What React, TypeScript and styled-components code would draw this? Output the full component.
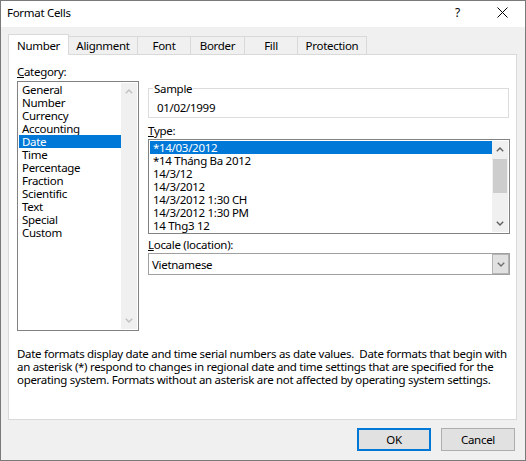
import React from 'react';
import styled, { createGlobalStyle } from 'styled-components';

const GlobalStyle = createGlobalStyle`
  html, body {
    margin: 0;
    padding: 0;
    background: #ffffff;
  }
  body {
    font-family: 'Noto Sans', 'Open Sans', sans-serif;
    font-size: 11.5px;
    letter-spacing: -0.3px;
    color: #000000;
  }
  * {
    box-sizing: border-box;
  }
`;

const Window = styled.div`
  width: 526px;
  height: 461px;
  border: 1px solid #7a7a7a;
  background: #f0f0f0;
  display: flex;
  flex-direction: column;
`;

const TitleBar = styled.div`
  height: 26px;
  background: #ffffff;
  display: flex;
  align-items: center;
  padding: 0 0 3px 6px;
`;

const Title = styled.div`
  flex: 1;
  line-height: 13px;
`;

const CaptionButton = styled.div`
  width: 45px;
  height: 20px;
  display: flex;
  align-items: center;
  justify-content: center;
  font-size: 12px;
  color: #000;
`;

const Body = styled.div`
  flex: 1;
  display: flex;
  flex-direction: column;
  padding: 7px 8px 0 7px;
`;

const TabStrip = styled.div`
  height: 20px;
  display: flex;
  align-items: flex-end;
`;

const Tab = styled.div<{ $width: number; $active?: boolean }>`
  position: relative;
  width: ${(p) => p.$width}px;
  height: ${(p) => (p.$active ? 21 : 18)}px;
  margin-bottom: ${(p) => (p.$active ? -1 : 0)}px;
  margin-left: -1px;
  z-index: ${(p) => (p.$active ? 2 : 1)};
  border: 1px solid #d9d9d9;
  border-bottom: none;
  background: ${(p) => (p.$active ? '#ffffff' : '#f0f0f0')};
  display: flex;
  justify-content: center;
  padding-top: ${(p) => (p.$active ? 4 : 2)}px;
  line-height: 13px;

  &:first-child {
    margin-left: 0;
  }
`;

const Panel = styled.div`
  width: 509px;
  height: 366px;
  background: #ffffff;
  border: 1px solid #d9d9d9;
  padding: 10px 6px 0 8px;
  display: flex;
  flex-direction: column;
`;

const Columns = styled.div`
  display: grid;
  grid-template-columns: 122px 362px;
  column-gap: 9px;
  align-items: start;
`;

const Column = styled.div`
  display: flex;
  flex-direction: column;
`;

const FieldLabel = styled.div<{ $gap: number; $top?: number }>`
  line-height: 13px;
  margin-top: ${(p) => p.$top ?? 0}px;
  margin-bottom: ${(p) => p.$gap}px;
`;

const ListBox = styled.div<{ $height: number }>`
  height: ${(p) => p.$height}px;
  border: 1px solid #828282;
  background: #ffffff;
  padding: 1px;
  display: flex;
`;

const Items = styled.div`
  flex: 1;
  display: flex;
  flex-direction: column;
`;

const Item = styled.div<{ $selected?: boolean }>`
  height: 13px;
  line-height: 13px;
  padding-left: 3px;
  white-space: nowrap;
  background: ${(p) => (p.$selected ? '#0078d7' : 'transparent')};
  color: ${(p) => (p.$selected ? '#ffffff' : '#000000')};
`;

const ScrollBar = styled.div`
  width: 16px;
  background: #f0f0f0;
  display: flex;
  flex-direction: column;
`;

const ScrollArrow = styled.div`
  height: 17px;
  display: flex;
  align-items: center;
  justify-content: center;
`;

const Track = styled.div`
  flex: 1;
  display: flex;
  flex-direction: column;
`;

const Thumb = styled.div`
  margin: 1px 1px 0 1px;
  height: 34px;
  background: #cdcdcd;
`;

const Group = styled.fieldset`
  margin: 17px 1px 0 0;
  padding: 0 8px 3px 8px;
  border: 1px solid #dcdcdc;
  min-width: 0;
`;

const Legend = styled.legend`
  margin-left: -4px;
  padding: 0 1px;
  line-height: 13px;
`;

const SampleValue = styled.div`
  margin-top: 6px;
  line-height: 13px;
`;

const Combo = styled.div`
  height: 22px;
  border: 1px solid #a0a0a0;
  background: #ffffff;
  display: flex;
  align-items: stretch;
`;

const ComboText = styled.div`
  flex: 1;
  padding-left: 3px;
  display: flex;
  align-items: center;
`;

const ComboButton = styled.div`
  width: 17px;
  background: #e1e1e1;
  border: 1px solid #b4b4b4;
  display: flex;
  align-items: center;
  justify-content: center;
`;

const Description = styled.p`
  margin: 16px 0 0 0;
  line-height: 13px;
`;

const ButtonRow = styled.div`
  display: flex;
  justify-content: flex-end;
  gap: 10px;
  margin: 8px 2px 0 0;
`;

const Button = styled.div<{ $default?: boolean }>`
  width: 74px;
  height: 23px;
  background: #e1e1e1;
  border: ${(p) => (p.$default ? '2px solid #0078d7' : '1px solid #adadad')};
  display: flex;
  align-items: center;
  justify-content: center;
`;

const Chevron = ({ up, color }: { up?: boolean; color: string }) => (
  <svg width="8" height="5" viewBox="0 0 8 5">
    <polyline
      points={up ? '0.8,4.2 4,1 7.2,4.2' : '0.8,0.8 4,4 7.2,0.8'}
      fill="none"
      stroke={color}
      strokeWidth="1.4"
    />
  </svg>
);

const tabs = [
  { label: 'Number', width: 61, active: true },
  { label: 'Alignment', width: 70 },
  { label: 'Font', width: 54 },
  { label: 'Border', width: 55 },
  { label: 'Fill', width: 54 },
  { label: 'Protection', width: 70 },
];

const categories = [
  'General',
  'Number',
  'Currency',
  'Accounting',
  'Date',
  'Time',
  'Percentage',
  'Fraction',
  'Scientific',
  'Text',
  'Special',
  'Custom',
];

const types = [
  '*14/03/2012',
  '*14 Tháng Ba 2012',
  '14/3/12',
  '14/3/2012',
  '14/3/2012 1:30 CH',
  '14/3/2012 1:30 PM',
  '14 Thg3 12',
];

export default function App() {
  return (
    <>
      <GlobalStyle />
      <Window>
        <TitleBar>
          <Title>Format Cells</Title>
          <CaptionButton>?</CaptionButton>
          <CaptionButton>
            <svg width="11" height="11" viewBox="0 0 11 11">
              <path d="M0.5 0.5 L10.5 10.5 M10.5 0.5 L0.5 10.5" stroke="#000" strokeWidth="1" />
            </svg>
          </CaptionButton>
        </TitleBar>
        <Body>
          <TabStrip>
            {tabs.map((t) => (
              <Tab key={t.label} $width={t.width} $active={t.active}>
                {t.label}
              </Tab>
            ))}
          </TabStrip>
          <Panel>
            <Columns>
              <Column>
                <FieldLabel $gap={3}>
                  <u>C</u>ategory:
                </FieldLabel>
                <ListBox $height={250}>
                  <Items>
                    {categories.map((c) => (
                      <Item key={c} $selected={c === 'Date'}>
                        {c}
                      </Item>
                    ))}
                  </Items>
                  <ScrollBar>
                    <ScrollArrow>
                      <Chevron up color="#c0c0c0" />
                    </ScrollArrow>
                    <Track />
                    <ScrollArrow>
                      <Chevron color="#c0c0c0" />
                    </ScrollArrow>
                  </ScrollBar>
                </ListBox>
              </Column>
              <Column>
                <Group>
                  <Legend>Sample</Legend>
                  <SampleValue>01/02/1999</SampleValue>
                </Group>
                <FieldLabel $gap={2} $top={6}>
                  <u>T</u>ype:
                </FieldLabel>
                <ListBox $height={95}>
                  <Items>
                    {types.map((t, i) => (
                      <Item key={t} $selected={i === 0}>
                        {t}
                      </Item>
                    ))}
                  </Items>
                  <ScrollBar>
                    <ScrollArrow>
                      <Chevron up color="#606060" />
                    </ScrollArrow>
                    <Track>
                      <Thumb />
                    </Track>
                    <ScrollArrow>
                      <Chevron color="#606060" />
                    </ScrollArrow>
                  </ScrollBar>
                </ListBox>
                <FieldLabel $gap={2} $top={4}>
                  <u>L</u>ocale (location):
                </FieldLabel>
                <Combo>
                  <ComboText>Vietnamese</ComboText>
                  <ComboButton>
                    <Chevron color="#707070" />
                  </ComboButton>
                </Combo>
              </Column>
            </Columns>
            <Description>
              Date formats display date and time serial numbers as date values.&nbsp; Date formats that begin with
              an asterisk (*) respond to changes in regional date and time settings that are specified for the
              operating system. Formats without an asterisk are not affected by operating system settings.
            </Description>
          </Panel>
          <ButtonRow>
            <Button $default>OK</Button>
            <Button>Cancel</Button>
          </ButtonRow>
        </Body>
      </Window>
    </>
  );
}
